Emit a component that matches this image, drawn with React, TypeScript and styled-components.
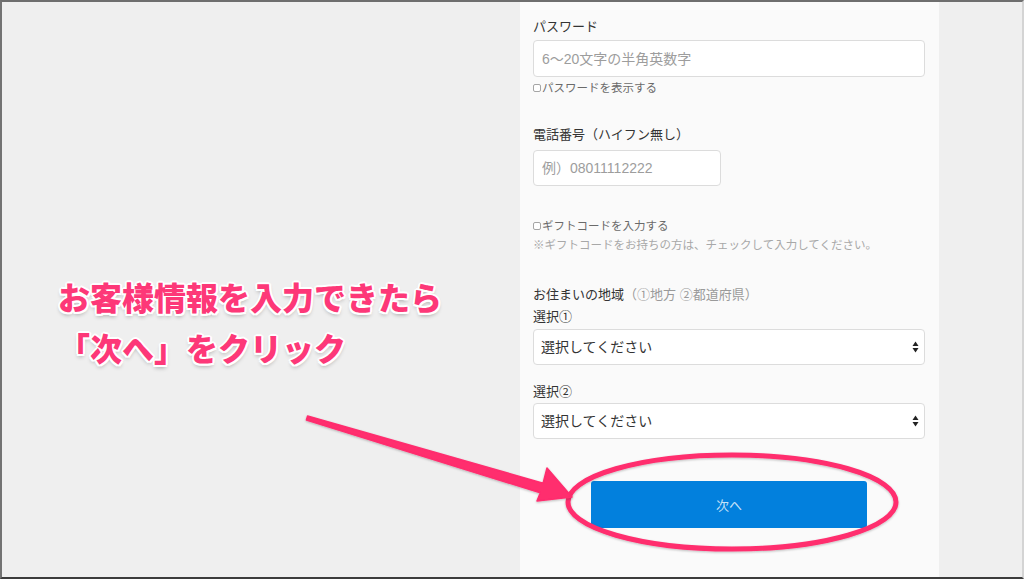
import React, { FC } from "react";
import styled, { createGlobalStyle } from "styled-components";

const GlobalStyle = createGlobalStyle`
    html, body {
        margin: 0;
        padding: 0;
        background: #efefef;
        font-family: "Liberation Sans", "Noto Sans CJK JP", sans-serif;
    }
    * { box-sizing: border-box; }
`

const ArrowsIcon = () => (
    <svg width="7" height="12" viewBox="0 0 7 12">
        <path d="M3.5 0.5 L6.5 5 L0.5 5 Z" fill="#222" />
        <path d="M3.5 11.5 L6.5 7 L0.5 7 Z" fill="#222" />
    </svg>
)

const Annotation: FC = () => (
    <Overlay>
        <svg width="1024" height="579" viewBox="0 0 1024 579">
            <defs>
                <filter id="shadow" x="-10%" y="-10%" width="120%" height="130%">
                    <feDropShadow dx="0" dy="1" stdDeviation="1" floodColor="#000" floodOpacity="0.25" />
                </filter>
            </defs>
            <ellipse cx="732" cy="502" rx="164" ry="47" fill="none" stroke="#ff2d6e" strokeWidth="5" filter="url(#shadow)" />
            <polygon
                points="307.6,416 543.1,483.2 547,468 572,497 537,501 540.3,492.8 306.4,420"
                fill="#ff2d6e"
                stroke="#ff2d6e"
                strokeWidth="1.5"
                strokeLinejoin="round"
                filter="url(#shadow)"
            />
        </svg>
        <Callout>
            お客様情報を入力できたら<br />
            「次へ」をクリック
        </Callout>
    </Overlay>
)

const App: FC = () => {
    return (
        <Frame>
            <GlobalStyle />
            <Side />
            <FormColumn>
                <Label>パスワード</Label>
                <TextInput type="password" placeholder="6〜20文字の半角英数字" />
                <CheckRow>
                    <Check type="checkbox" />
                    パスワードを表示する
                </CheckRow>

                <Label $gap={29}>電話番号（ハイフン無し）</Label>
                <TextInput $narrow type="tel" placeholder="例）08011112222" />

                <CheckRow $gap={32}>
                    <Check type="checkbox" />
                    ギフトコードを入力する
                </CheckRow>
                <Note>※ギフトコードをお持ちの方は、チェックして入力してください。</Note>

                <Label $gap={32}>
                    お住まいの地域<Muted>（①地方 ②都道府県）</Muted>
                </Label>
                <Label $gap={2}>選択①</Label>
                <SelectBox>
                    <Select defaultValue="">
                        <option value="">選択してください</option>
                    </Select>
                    <ArrowSlot><ArrowsIcon /></ArrowSlot>
                </SelectBox>
                <Label $gap={17}>選択②</Label>
                <SelectBox $gap={1}>
                    <Select defaultValue="">
                        <option value="">選択してください</option>
                    </Select>
                    <ArrowSlot><ArrowsIcon /></ArrowSlot>
                </SelectBox>

                <NextButton>次へ</NextButton>
            </FormColumn>
            <Side $fill />
            <Annotation />
        </Frame>
    )
}

const Frame = styled.div`
    position: relative;
    display: flex;
    width: 100vw;
    height: 100vh;
    border-top: 2px solid #6e6e6e;
    border-left: 2px solid #737373;
    border-bottom: 2px solid #3c3c3c;
    border-right: 2px solid #d4d4d4;
    background: #efefef;
    overflow: hidden;
`
const Side = styled.div<{ $fill?: boolean }>`
    flex: ${p => (p.$fill ? "1" : "0 0 518px")};
`
const FormColumn = styled.div`
    flex: 0 0 419px;
    display: flex;
    flex-direction: column;
    padding: 15px 14px 0 13px;
    background: #fafafa;
`
const Label = styled.div<{ $gap?: number }>`
    margin-top: ${p => p.$gap ?? 0}px;
    font-size: 13px;
    line-height: 20px;
    color: #333;
`
const Muted = styled.span`
    color: #9a9a9a;
`
const TextInput = styled.input<{ $narrow?: boolean }>`
    margin-top: ${p => (p.$narrow ? 5 : 3)}px;
    width: ${p => (p.$narrow ? "188px" : "100%")};
    height: ${p => (p.$narrow ? 36 : 37)}px;
    padding: 0 8px;
    border: 1px solid #dcdcdc;
    border-radius: 4px;
    background: #fff;
    font-family: inherit;
    font-size: 14px;
    color: #333;
    outline: none;
    &::placeholder {
        color: #9d9d9d;
    }
`
const CheckRow = styled.label<{ $gap?: number }>`
    margin-top: ${p => p.$gap ?? 3}px;
    display: flex;
    align-items: center;
    font-size: 11.5px;
    line-height: 16px;
    color: #6a6a6a;
`
const Check = styled.input`
    appearance: none;
    margin: 0 1px 0 0;
    width: 8px;
    height: 8px;
    border: 1px solid #a5a5a5;
    border-radius: 2px;
    background: #fff;
`
const Note = styled.div`
    margin-top: 3px;
    font-size: 11.5px;
    line-height: 16px;
    color: #a8a8a8;
`
const SelectBox = styled.div<{ $gap?: number }>`
    position: relative;
    margin-top: ${p => p.$gap ?? 2}px;
    height: 36px;
`
const Select = styled.select`
    appearance: none;
    width: 100%;
    height: 100%;
    padding: 0 24px 0 7px;
    border: 1px solid #dcdcdc;
    border-radius: 4px;
    background: #fff;
    font-family: inherit;
    font-size: 14px;
    color: #333;
    outline: none;
`
const ArrowSlot = styled.span`
    position: absolute;
    right: 6px;
    top: 12px;
    display: flex;
    pointer-events: none;
`
const NextButton = styled.button`
    align-self: center;
    margin-top: 42px;
    width: 276px;
    height: 47px;
    border: none;
    border-radius: 3px;
    background: #0280dd;
    font-family: inherit;
    font-size: 13px;
    color: rgba(255, 255, 255, 0.78);
    cursor: pointer;
`
const Overlay = styled.div`
    position: absolute;
    left: -2px;
    top: -2px;
    width: 1024px;
    height: 579px;
    pointer-events: none;
`
const Callout = styled.div`
    position: absolute;
    left: 58px;
    top: 271px;
    font-family: "Noto Sans CJK JP", sans-serif;
    font-size: 32px;
    font-weight: 900;
    line-height: 51px;
    color: #fd3878;
    text-shadow:
        2px 0 0 #fff, -2px 0 0 #fff, 0 2px 0 #fff, 0 -2px 0 #fff,
        1.5px 1.5px 0 #fff, -1.5px 1.5px 0 #fff, 1.5px -1.5px 0 #fff, -1.5px -1.5px 0 #fff,
        0 3px 4px rgba(0, 0, 0, 0.3);
`

export default App
